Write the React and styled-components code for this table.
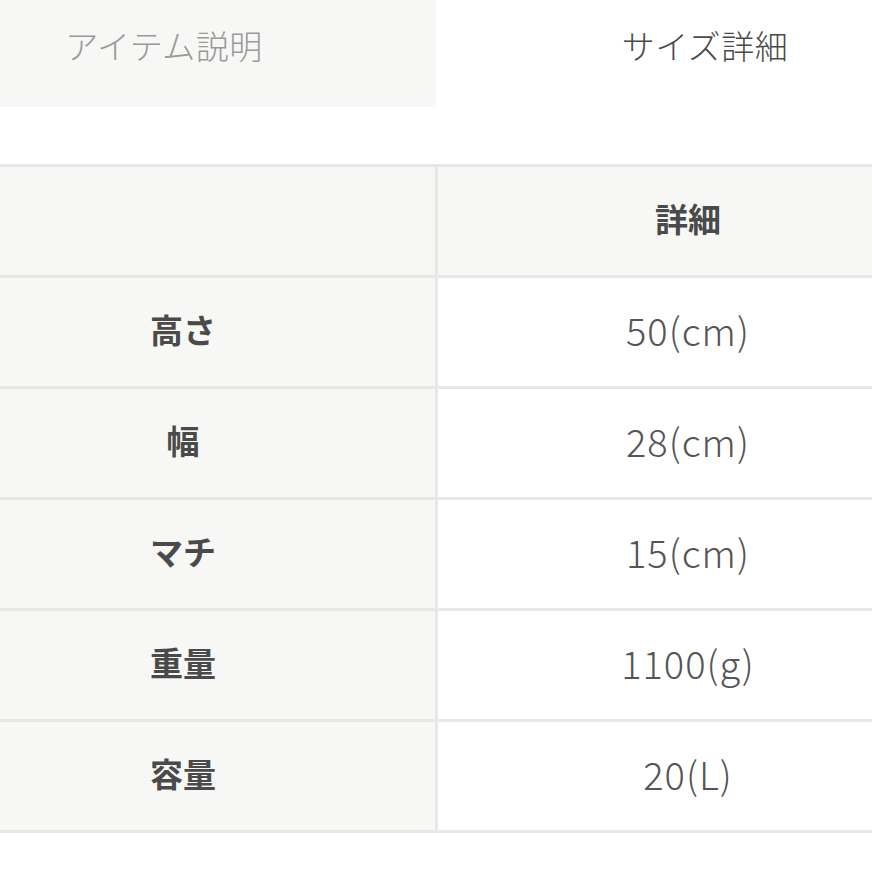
import React from "react";
import styled, { createGlobalStyle } from "styled-components";

const GlobalStyle = createGlobalStyle`
  html, body {
    margin: 0;
    padding: 0;
    background: #ffffff;
    font-family: "Noto Sans CJK JP", "Noto Sans", sans-serif;
    overflow: hidden;
  }
`;

const Page = styled.div`
  width: 872px;
  height: 872px;
  background: #fff;
`;

const Tabs = styled.div`
  display: grid;
  grid-template-columns: 436px 1fr;
  height: 107px;
`;

const Tab = styled.div`
  display: flex;
  align-items: center;
  justify-content: center;
  padding-bottom: 18px;
  box-sizing: border-box;
  font-size: 33px;
  font-weight: 300;
  letter-spacing: 0.5px;
  background: ${(p) => (p.active ? "#ffffff" : "#f7f7f5")};
  color: ${(p) => (p.active ? "#4a4a4a" : "#9a9a9a")};
  padding-left: ${(p) => (p.active ? "102px" : "0")};
  padding-right: ${(p) => (p.active ? "0" : "108px")};
`;

const Table = styled.div`
  margin-top: 57px;
  display: grid;
  grid-template-columns: 435px 1fr;
  grid-auto-rows: 108px;
  gap: 3px;
  padding: 3px 0;
  background: #e7e7e5;
`;

const Cell = styled.div`
  display: flex;
  align-items: center;
  justify-content: center;
  box-sizing: border-box;
  padding-bottom: 6px;
  color: #4a4a4a;
  background: ${(p) => (p.shade ? "#f7f7f5" : "#ffffff")};
`;

const Label = styled(Cell)`
  padding-right: 69px;
  font-size: 33px;
  font-weight: 700;
`;

const Value = styled(Cell)`
  padding-left: 66px;
  font-size: ${(p) => (p.head ? "33px" : "38px")};
  font-weight: ${(p) => (p.head ? 700 : 300)};
  letter-spacing: ${(p) => (p.head ? "0" : "1px")};
  color: ${(p) => (p.head ? "#4a4a4a" : "#555555")};
`;

const rows = [
  ["高さ", "50(cm)"],
  ["幅", "28(cm)"],
  ["マチ", "15(cm)"],
  ["重量", "1100(g)"],
  ["容量", "20(L)"],
];

export default function App() {
  return (
    <>
      <GlobalStyle />
      <Page>
        <Tabs>
          <Tab>アイテム説明</Tab>
          <Tab active>サイズ詳細</Tab>
        </Tabs>
        <Table>
          <Label shade />
          <Value shade head>詳細</Value>
          {rows.map(([label, value]) => (
            <React.Fragment key={label}>
              <Label shade>{label}</Label>
              <Value>{value}</Value>
            </React.Fragment>
          ))}
        </Table>
      </Page>
    </>
  );
}
